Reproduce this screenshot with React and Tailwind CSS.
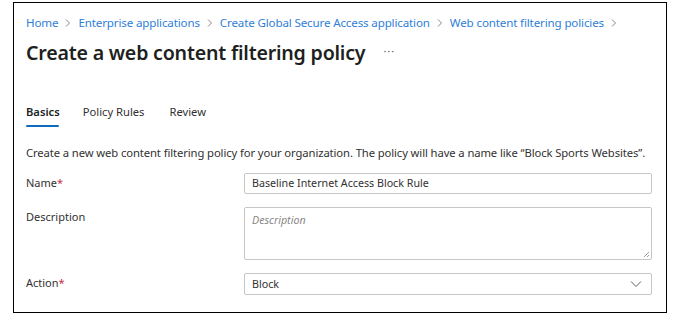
import React from "react";

const font = { fontFamily: '"Noto Sans", "Open Sans", sans-serif' };

function Chevron() {
  return (
    <svg width="8" height="10" viewBox="0 0 8 10" className="mx-[6px]">
      <path d="M2 1.5 L5.5 5 L2 8.5" fill="none" stroke="#8a8886" strokeWidth="1" />
    </svg>
  );
}

export default function App() {
  const crumbs = [
    "Home",
    "Enterprise applications",
    "Create Global Secure Access application",
    "Web content filtering policies",
  ];
  return (
    <div className="w-[677px] h-[318px] bg-white" style={font}>
      <div className="ml-[13px] mt-[2px] w-[654px] h-[311px] border border-black pl-[12px] pr-[14px] text-[#323130]">
        <div className="flex items-center whitespace-nowrap h-[20px] mt-[10px] text-[11.6px] tracking-[-0.15px] text-[#2f80d8]">
          {crumbs.map((c) => (
            <React.Fragment key={c}>
              <span>{c}</span>
              <Chevron />
            </React.Fragment>
          ))}
        </div>
        <div className="flex items-center h-[36px] mt-[2px] whitespace-nowrap">
          <h1 className="text-[19.6px] font-semibold text-[#201f1e] tracking-[-0.2px]">
            Create a web content filtering policy
          </h1>
          <span className="ml-[18px] text-[11px] text-[#605e5c] tracking-[1px] -mt-[4px]">···</span>
        </div>
        <div className="flex mt-[32px] text-[11.2px] h-[25px] whitespace-nowrap">
          <div className="flex flex-col">
            <span className="font-semibold text-[#201f1e] leading-[18px]">Basics</span>
            <div className="mt-[4px] h-[2px] bg-[#0f6cbd] rounded-full w-[33px]" />
          </div>
          <span className="ml-[23px] leading-[18px]">Policy Rules</span>
          <span className="ml-[25px] leading-[18px]">Review</span>
        </div>
        <p className="mt-[17px] text-[11.25px] leading-[16px] whitespace-nowrap tracking-[-0.1px]">
          Create a new web content filtering policy for your organization. The policy will have a name like “Block Sports Websites”.
        </p>
        <div className="mt-[12px] flex flex-col gap-[13px] text-[11px] whitespace-nowrap">
          <div className="flex items-start">
            <div className="w-[218px] pt-[2px]">
              Name<span className="text-[#c4314b]">*</span>
            </div>
            <div className="flex-1 h-[21px] border border-[#c8c6c4] rounded-[2px] px-[7px] flex items-center text-[10.7px]">
              Baseline Internet Access Block Rule
            </div>
          </div>
          <div className="flex items-start">
            <div className="w-[218px] pt-[2px]">Description</div>
            <div className="relative flex-1 h-[53px] border border-[#c8c6c4] rounded-[2px] px-[7px] pt-[4px] italic text-[10.7px] text-[#8a8886]">
              Description
              <svg className="absolute right-[1px] bottom-[1px]" width="7" height="7" viewBox="0 0 7 7">
                <path d="M6 1 L1 6 M6 4 L4 6" stroke="#a19f9d" strokeWidth="1" />
              </svg>
            </div>
          </div>
          <div className="flex items-start">
            <div className="w-[218px] pt-[2px]">
              Action<span className="text-[#c4314b]">*</span>
            </div>
            <div className="flex-1 h-[22px] border border-[#c8c6c4] rounded-[2px] px-[7px] flex items-center justify-between text-[10.7px]">
              <span>Block</span>
              <svg width="12" height="8" viewBox="0 0 12 8" className="mr-[2px]">
                <path d="M1 1.5 L6 6.5 L11 1.5" fill="none" stroke="#605e5c" strokeWidth="1" />
              </svg>
            </div>
          </div>
        </div>
      </div>
    </div>
  );
}
